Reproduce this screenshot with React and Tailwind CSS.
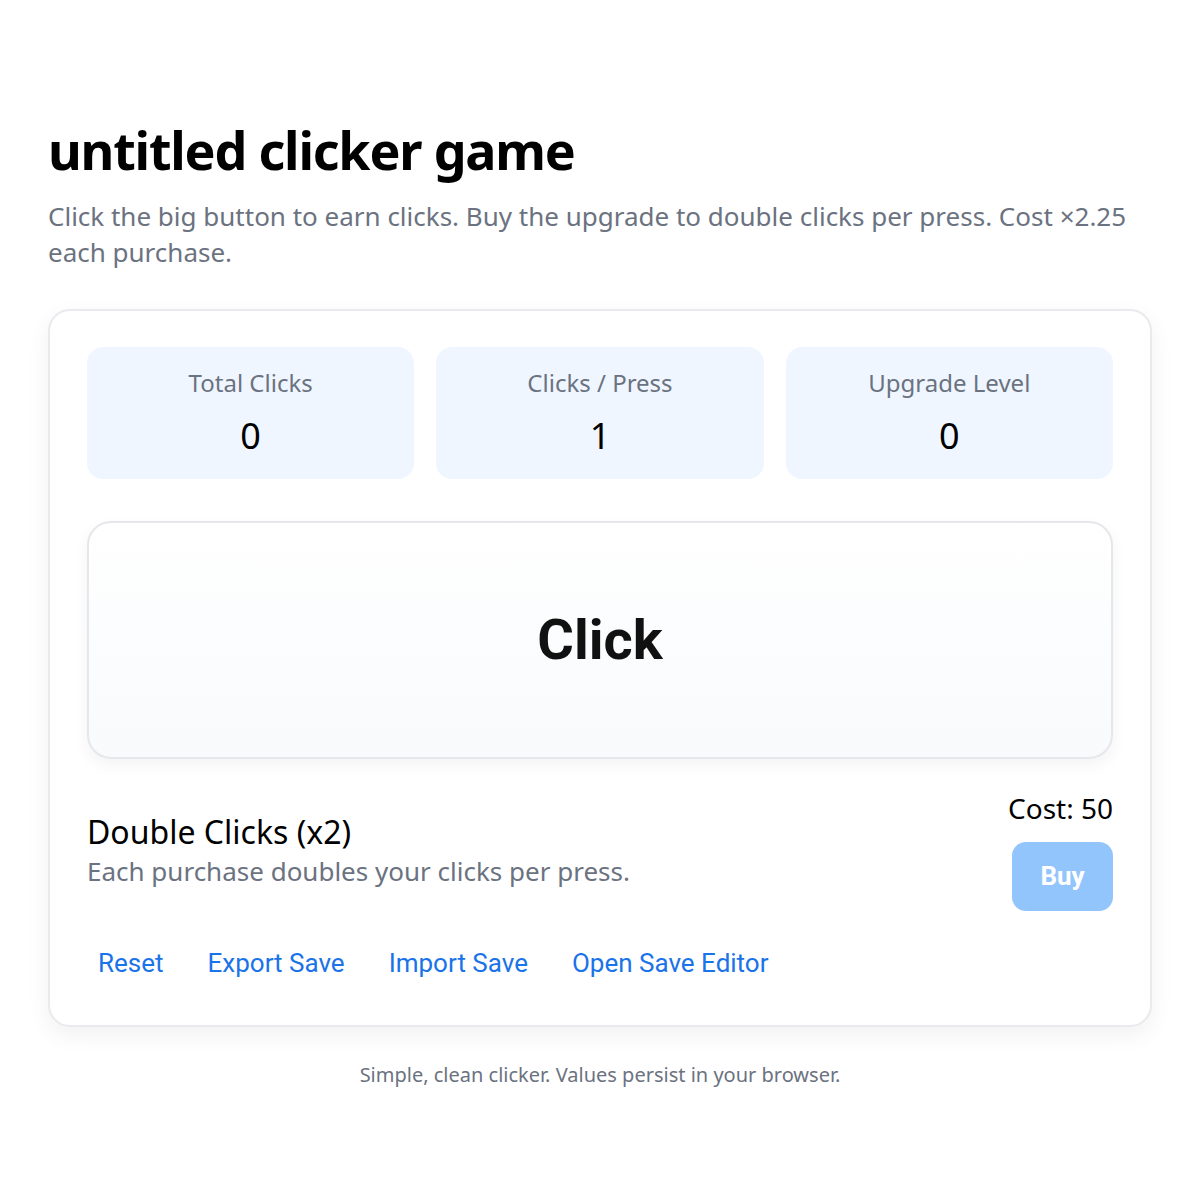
export default function App() {
  const stats = [
    { label: "Total Clicks", value: "0" },
    { label: "Clicks / Press", value: "1" },
    { label: "Upgrade Level", value: "0" },
  ];
  return (
    <div className="min-h-[1200px] bg-white px-12 pt-[118px] text-black" style={{ fontFamily: '"Noto Sans", sans-serif' }}>
      <h1 className="text-[52px] font-bold leading-[64px] tracking-[-0.023em]">untitled clicker game</h1>
      <p className="mt-[16px] text-[26px] leading-[36px] text-[#6b7280]">
        Click the big button to earn clicks. Buy the upgrade to double clicks per press. Cost ×2.25 each purchase.
      </p>
      <div className="mt-[39px] rounded-[22px] border-2 border-[#e9eaee] bg-white px-[37px] pt-[36px] pb-[37px] shadow-[0_8px_24px_rgba(0,0,0,0.06)]">
        <div className="grid grid-cols-3 gap-[22px]">
          {stats.map((s) => (
            <div key={s.label} className="flex h-[132px] flex-col items-center rounded-[16px] bg-[#eff6ff] pt-[20px]">
              <div className="text-[24px] leading-[32px] text-[#6b7280]">{s.label}</div>
              <div className="mt-[17px] text-[36px] leading-[40px]">{s.value}</div>
            </div>
          ))}
        </div>
        <button
          className="mt-[42px] flex h-[238px] w-full items-center justify-center rounded-[24px] border-2 border-[#e5e7eb] bg-gradient-to-b from-white to-[#f8fafc] text-[56px] font-bold text-[#111] shadow-[0_6px_16px_rgba(0,0,0,0.05)]"
          style={{ fontFamily: 'Roboto, sans-serif' }}
        >
          Click
        </button>
        <div className="mt-[30px] flex items-start justify-between">
          <div className="pt-[22px]">
            <div className="text-[32px] leading-[42px]">Double Clicks (x2)</div>
            <div className="text-[26px] leading-[36px] text-[#6b7280]">Each purchase doubles your clicks per press.</div>
          </div>
          <div className="flex flex-col items-end">
            <div className="text-[28px] leading-[38px]">Cost: 50</div>
            <button
              className="mt-[15px] h-[69px] w-[101px] rounded-[14px] bg-[#93c5fd] text-[26px] font-bold text-white"
              style={{ fontFamily: 'Roboto, sans-serif' }}
            >
              Buy
            </button>
          </div>
        </div>
        <div className="mt-[27px] flex gap-[22px]" style={{ fontFamily: 'Roboto, sans-serif' }}>
          {["Reset", "Export Save", "Import Save", "Open Save Editor"].map((t) => (
            <button key={t} className="px-[11px] py-[8px] text-[26px] leading-[34px] text-[#1a73e8]">
              {t}
            </button>
          ))}
        </div>
      </div>
      <p className="mt-[34px] text-center text-[20px] leading-[28px] text-[#6b7280]">
        Simple, clean clicker. Values persist in your browser.
      </p>
    </div>
  );
}
